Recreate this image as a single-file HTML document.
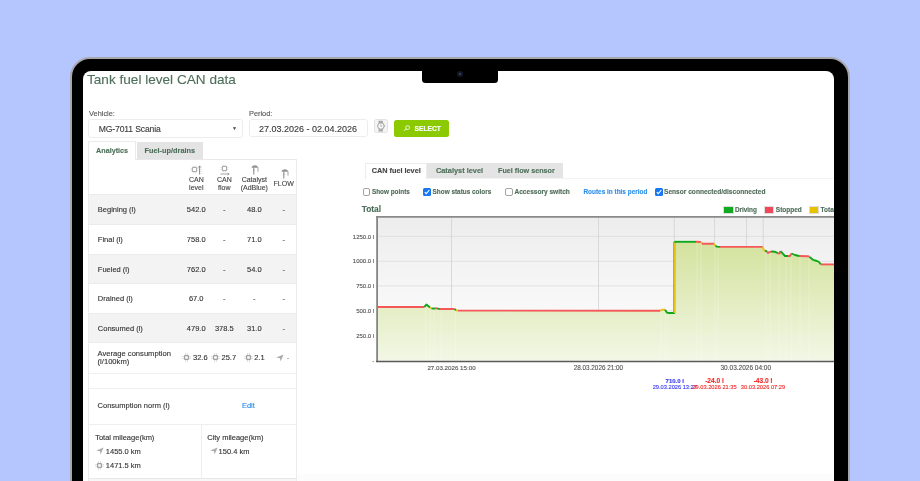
<!DOCTYPE html>
<html><head><meta charset="utf-8">
<style>
*{box-sizing:border-box;margin:0;padding:0}
html,body{width:920px;height:481px;overflow:hidden;background:#b5c5fd;font-family:"Liberation Sans",sans-serif}
.abs{position:absolute}
#frame{position:absolute;left:70px;top:57px;width:780px;height:520px;border-radius:20px;background:#000;border:2px solid #a8a8ac}
#screen{position:absolute;left:83px;top:71px;width:751px;height:420px;background:#fff;border-radius:8px 8px 0 0;overflow:hidden}
#pg{position:absolute;left:-83px;top:-71px;width:920px;height:481px;will-change:transform}
#notch{position:absolute;left:422.3px;top:70px;width:75.9px;height:13.3px;background:#000;border-radius:0 0 3.5px 3.5px}
#cam{position:absolute;left:457px;top:71px;width:6px;height:6px;border-radius:50%;background:#141820}
#cam:after{content:"";position:absolute;left:2px;top:2px;width:2px;height:2px;border-radius:50%;background:#2a4a80}
.t{position:absolute;white-space:nowrap;line-height:1;-webkit-text-stroke:0.12px currentColor}
</style></head><body>
<div id="frame"></div>
<div id="screen"><div id="pg">
<div class="t" style="left:87px;top:73px;font-size:13.6px;color:#4d6f5a;">Tank fuel level CAN data</div>
<div class="t" style="left:89px;top:110px;font-size:7.4px;color:#555;">Vehicle:</div>
<div class="abs" style="left:88.2px;top:119.2px;width:154.6px;height:18.6px;border:1px solid #ededed;border-radius:3px"></div>
<div class="t" style="left:98.8px;top:125px;font-size:8.6px;color:#3a3a3a;letter-spacing:-0.15px">MG-7011 Scania</div>
<div class="t" style="left:232px;top:126px;font-size:5px;color:#555;">&#9660;</div>
<div class="t" style="left:249px;top:110px;font-size:7.35px;color:#555;">Period:</div>
<div class="abs" style="left:248.8px;top:119.1px;width:119px;height:18.4px;border:1px solid #ededed;border-radius:3px"></div>
<div class="t" style="left:259px;top:124.6px;font-size:9px;color:#3a3a3a;">27.03.2026 - 02.04.2026</div>
<div class="abs" style="left:373.9px;top:119.3px;width:13.9px;height:14px;border:0.8px solid #e2e2e2;border-radius:2.5px;background:#f4f4f4"></div>
<svg class="abs" style="left:373.9px;top:119.3px" width="14" height="14" viewBox="0 0 14 14"><path d="M4.5 1.8h4.4v2.2h-4.4zM4.5 10.2h4.4v2.2h-4.4z" fill="#a8a8a8"/><circle cx="6.9" cy="7.05" r="3.25" fill="#f6f6f6" stroke="#9a9a9a" stroke-width="0.9"/><path d="M6.8 5.2V7.3H8.2" fill="none" stroke="#9a9a9a" stroke-width="0.6"/><path d="M10.1 6.3L11.3 7L10.1 7.7Z" fill="#9a9a9a"/></svg>
<div class="abs" style="left:394px;top:119.6px;width:55px;height:17.1px;background:#8bc900;border-radius:2.5px"></div>
<svg class="abs" style="left:402.8px;top:125.4px" width="7.5" height="6.5" viewBox="0 0 7.5 6.5"><rect x="2.8" y="0.8" width="3.6" height="3.6" rx="1.2" fill="none" stroke="#eef8dc" stroke-width="0.9"/><path d="M3.3 4L0.8 5.7" stroke="#eef8dc" stroke-width="1"/></svg>
<div class="t" style="left:414.6px;top:126.2px;font-size:6.65px;font-weight:bold;color:#fff;">SELECT</div>
<div class="abs" style="left:88px;top:158.7px;width:209px;height:330px;border:1px solid #ececec;border-top:1px solid #e8e8e8"></div>
<div class="abs" style="left:88.1px;top:141px;width:48px;height:19px;border:1px solid #ebebeb;border-bottom:none;background:#fff"></div>
<div class="t" style="left:96.1px;top:146.5px;font-size:7.2px;font-weight:bold;color:#4d6f5a;">Analytics</div>
<div class="abs" style="left:136.8px;top:142.1px;width:66.1px;height:16.5px;background:#e4e4e4"></div>
<div class="t" style="left:144.5px;top:146.5px;font-size:7.35px;font-weight:bold;color:#4d6f5a;">Fuel-up/drains</div>
<div class="abs" style="left:89px;top:194.5px;width:207.2px;height:29.9px;background:#f3f3f3"></div>
<div class="abs" style="left:89px;top:254.5px;width:207.2px;height:28.9px;background:#f3f3f3"></div>
<div class="abs" style="left:89px;top:313.5px;width:207.2px;height:29.0px;background:#f3f3f3"></div>
<div class="abs" style="left:89px;top:194.0px;width:207.2px;height:1px;background:#ebebeb"></div>
<div class="abs" style="left:89px;top:223.9px;width:207.2px;height:1px;background:#ebebeb"></div>
<div class="abs" style="left:89px;top:254.0px;width:207.2px;height:1px;background:#ebebeb"></div>
<div class="abs" style="left:89px;top:282.9px;width:207.2px;height:1px;background:#ebebeb"></div>
<div class="abs" style="left:89px;top:313.0px;width:207.2px;height:1px;background:#ebebeb"></div>
<div class="abs" style="left:89px;top:342.0px;width:207.2px;height:1px;background:#ebebeb"></div>
<div class="t" style="left:97.8px;top:206.05px;font-size:7.5px;color:#333;">Begining (l)</div>
<div class="t" style="left:146.2px;width:100px;text-align:center;top:206.05px;font-size:7.5px;color:#333;">542.0</div>
<div class="t" style="left:174.3px;width:100px;text-align:center;top:206.05px;font-size:7.5px;color:#333;">-</div>
<div class="t" style="left:204.3px;width:100px;text-align:center;top:206.05px;font-size:7.5px;color:#333;">48.0</div>
<div class="t" style="left:233.7px;width:100px;text-align:center;top:206.05px;font-size:7.5px;color:#333;">-</div>
<div class="t" style="left:97.8px;top:236.05px;font-size:7.5px;color:#333;">Final (l)</div>
<div class="t" style="left:146.2px;width:100px;text-align:center;top:236.05px;font-size:7.5px;color:#333;">758.0</div>
<div class="t" style="left:174.3px;width:100px;text-align:center;top:236.05px;font-size:7.5px;color:#333;">-</div>
<div class="t" style="left:204.3px;width:100px;text-align:center;top:236.05px;font-size:7.5px;color:#333;">71.0</div>
<div class="t" style="left:233.7px;width:100px;text-align:center;top:236.05px;font-size:7.5px;color:#333;">-</div>
<div class="t" style="left:97.8px;top:265.55px;font-size:7.5px;color:#333;">Fueled (l)</div>
<div class="t" style="left:146.2px;width:100px;text-align:center;top:265.55px;font-size:7.5px;color:#333;">762.0</div>
<div class="t" style="left:174.3px;width:100px;text-align:center;top:265.55px;font-size:7.5px;color:#333;">-</div>
<div class="t" style="left:204.3px;width:100px;text-align:center;top:265.55px;font-size:7.5px;color:#333;">54.0</div>
<div class="t" style="left:233.7px;width:100px;text-align:center;top:265.55px;font-size:7.5px;color:#333;">-</div>
<div class="t" style="left:97.8px;top:295.05px;font-size:7.5px;color:#333;">Drained (l)</div>
<div class="t" style="left:146.2px;width:100px;text-align:center;top:295.05px;font-size:7.5px;color:#333;">67.0</div>
<div class="t" style="left:174.3px;width:100px;text-align:center;top:295.05px;font-size:7.5px;color:#333;">-</div>
<div class="t" style="left:204.3px;width:100px;text-align:center;top:295.05px;font-size:7.5px;color:#333;">-</div>
<div class="t" style="left:233.7px;width:100px;text-align:center;top:295.05px;font-size:7.5px;color:#333;">-</div>
<div class="t" style="left:97.8px;top:324.6px;font-size:7.5px;color:#333;">Consumed (l)</div>
<div class="t" style="left:146.2px;width:100px;text-align:center;top:324.6px;font-size:7.5px;color:#333;">479.0</div>
<div class="t" style="left:174.3px;width:100px;text-align:center;top:324.6px;font-size:7.5px;color:#333;">378.5</div>
<div class="t" style="left:204.3px;width:100px;text-align:center;top:324.6px;font-size:7.5px;color:#333;">31.0</div>
<div class="t" style="left:233.7px;width:100px;text-align:center;top:324.6px;font-size:7.5px;color:#333;">-</div>
<div class="t" style="left:146.3px;width:100px;text-align:center;top:176.3px;font-size:7px;color:#444;">CAN</div>
<div class="t" style="left:146.3px;width:100px;text-align:center;top:184.3px;font-size:7px;color:#444;">level</div>
<div class="t" style="left:174.3px;width:100px;text-align:center;top:176.3px;font-size:7px;color:#444;">CAN</div>
<div class="t" style="left:174.3px;width:100px;text-align:center;top:184.3px;font-size:7px;color:#444;">flow</div>
<div class="t" style="left:204.3px;width:100px;text-align:center;top:176.3px;font-size:7px;color:#444;">Catalyst</div>
<div class="t" style="left:204.3px;width:100px;text-align:center;top:184.3px;font-size:7px;color:#444;">(AdBlue)</div>
<div class="t" style="left:233.7px;width:100px;text-align:center;top:180.2px;font-size:7px;color:#444;">FLOW</div>
<svg class="abs" style="left:190.2px;top:164.9px" width="9" height="9" viewBox="0 0 9 9"><rect x="2.3" y="2.3" width="4.4" height="4.4" rx="0.6" fill="none" stroke="#999" stroke-width="1"/><path d="M3.4 0.5v1.3M5.6 0.5v1.3M3.4 7.2v1.3M5.6 7.2v1.3M0.5 3.4h1.3M0.5 5.6h1.3M7.2 3.4h1.3M7.2 5.6h1.3" stroke="#d0d0d0" stroke-width="0.6"/></svg>
<svg class="abs" style="left:197px;top:164.5px" width="5" height="10" viewBox="0 0 5 10"><path d="M2.6 1v8.5" stroke="#8a8a8a" stroke-width="1"/><path d="M1.2 2.6L2.6 0.8L4 2.6" fill="none" stroke="#8a8a8a" stroke-width="0.8"/><path d="M3.6 4.5h1M3.6 6.5h1M3.6 8.5h1" stroke="#bbb" stroke-width="0.6"/></svg>
<svg class="abs" style="left:220.1px;top:164.1px" width="9" height="9" viewBox="0 0 9 9"><rect x="2.3" y="2.3" width="4.4" height="4.4" rx="0.6" fill="none" stroke="#999" stroke-width="1"/><path d="M3.4 0.5v1.3M5.6 0.5v1.3M3.4 7.2v1.3M5.6 7.2v1.3M0.5 3.4h1.3M0.5 5.6h1.3M7.2 3.4h1.3M7.2 5.6h1.3" stroke="#d0d0d0" stroke-width="0.6"/></svg>
<svg class="abs" style="left:219.5px;top:171.5px" width="10" height="4" viewBox="0 0 10 4"><path d="M0.5 2h8.6" stroke="#8a8a8a" stroke-width="0.8"/><path d="M7.6 0.9L9.1 2L7.6 3.1" fill="none" stroke="#8a8a8a" stroke-width="0.7"/></svg>
<svg class="abs" style="left:251.4px;top:164.5px" width="8" height="10" viewBox="0 0 8 10"><path d="M0.4 2.8Q0.8 0.3 3.6 0.3Q6.4 0.3 7.2 2.2L7.2 2.8Z" fill="#929292"/><path d="M2.8 2.4v7.2" stroke="#8f8f8f" stroke-width="1.1"/><path d="M2.1 5.2h1.4" stroke="#9a9a9a" stroke-width="0.9"/><path d="M7 2.5v4.2" stroke="#9c9c9c" stroke-width="0.9"/></svg>
<svg class="abs" style="left:280.8px;top:169.2px" width="8" height="10" viewBox="0 0 8 10"><path d="M0.4 2.8Q0.8 0.3 3.6 0.3Q6.4 0.3 7.2 2.2L7.2 2.8Z" fill="#929292"/><path d="M2.8 2.4v7.2" stroke="#8f8f8f" stroke-width="1.1"/><path d="M2.1 5.2h1.4" stroke="#9a9a9a" stroke-width="0.9"/><path d="M7 2.5v4.2" stroke="#9c9c9c" stroke-width="0.9"/></svg>
<div class="t" style="left:97.6px;top:350.1px;font-size:7.6px;color:#333;line-height:8.2px">Average consumption<br>(l/100km)</div>
<svg class="abs" style="left:181.9px;top:352.7px" width="9" height="9" viewBox="0 0 9 9"><rect x="2.6" y="2.6" width="3.8" height="3.8" rx="0.4" fill="none" stroke="#a2a2a2" stroke-width="1.25"/><path d="M3.6 0.2v1.8M5.4 0.2v1.8M3.6 7v1.8M5.4 7v1.8M0.2 3.6h1.8M0.2 5.4h1.8M7 3.6h1.8M7 5.4h1.8" stroke="#c8c8c8" stroke-width="0.7"/></svg>
<div class="t" style="left:193px;top:354.3px;font-size:7.5px;color:#333;">32.6</div>
<svg class="abs" style="left:210.5px;top:352.7px" width="9" height="9" viewBox="0 0 9 9"><rect x="2.6" y="2.6" width="3.8" height="3.8" rx="0.4" fill="none" stroke="#a2a2a2" stroke-width="1.25"/><path d="M3.6 0.2v1.8M5.4 0.2v1.8M3.6 7v1.8M5.4 7v1.8M0.2 3.6h1.8M0.2 5.4h1.8M7 3.6h1.8M7 5.4h1.8" stroke="#c8c8c8" stroke-width="0.7"/></svg>
<div class="t" style="left:221.5px;top:354.3px;font-size:7.5px;color:#333;">25.7</div>
<svg class="abs" style="left:243.8px;top:352.7px" width="9" height="9" viewBox="0 0 9 9"><rect x="2.6" y="2.6" width="3.8" height="3.8" rx="0.4" fill="none" stroke="#a2a2a2" stroke-width="1.25"/><path d="M3.6 0.2v1.8M5.4 0.2v1.8M3.6 7v1.8M5.4 7v1.8M0.2 3.6h1.8M0.2 5.4h1.8M7 3.6h1.8M7 5.4h1.8" stroke="#c8c8c8" stroke-width="0.7"/></svg>
<div class="t" style="left:254.3px;top:354.3px;font-size:7.5px;color:#333;">2.1</div>
<svg class="abs" style="left:276.3px;top:353.6px" width="8" height="8" viewBox="0 0 8 8"><path d="M0.3 3.6L7.6 0.4L4.6 7.6L4 4.2Z" fill="#aaa"/></svg>
<div class="t" style="left:286.8px;top:354.3px;font-size:7.5px;color:#777;">-</div>
<div class="abs" style="left:89px;top:372.5px;width:207.2px;height:1px;background:#efefef"></div>
<div class="abs" style="left:89px;top:387.7px;width:207.2px;height:1px;background:#efefef"></div>
<div class="t" style="left:97.6px;top:402px;font-size:7.5px;color:#333;">Consumption norm (l)</div>
<div class="t" style="left:241.9px;top:402px;font-size:7.5px;color:#2d8fe6;">Edit</div>
<div class="abs" style="left:89px;top:423.5px;width:207.2px;height:1px;background:#eeeeee"></div>
<div class="abs" style="left:200.8px;top:424px;width:1px;height:54.5px;background:#eeeeee"></div>
<div class="abs" style="left:89px;top:478.2px;width:207px;height:1px;background:#e8e8e8"></div>
<div class="abs" style="left:89px;top:479.2px;width:207px;height:3px;background:#f7f7f7"></div>
<div class="t" style="left:95.2px;top:433.7px;font-size:7.5px;color:#333;">Total mileage(km)</div>
<svg class="abs" style="left:96.1px;top:447.3px" width="8" height="8" viewBox="0 0 8 8"><path d="M0.3 3.6L7.6 0.4L4.6 7.6L4 4.2Z" fill="#adadad"/></svg>
<div class="t" style="left:105.8px;top:447.8px;font-size:7.5px;color:#333;">1455.0 km</div>
<svg class="abs" style="left:95.1px;top:460.6px" width="9" height="9" viewBox="0 0 9 9"><rect x="2.6" y="2.6" width="3.8" height="3.8" rx="0.4" fill="none" stroke="#a2a2a2" stroke-width="1.25"/><path d="M3.6 0.2v1.8M5.4 0.2v1.8M3.6 7v1.8M5.4 7v1.8M0.2 3.6h1.8M0.2 5.4h1.8M7 3.6h1.8M7 5.4h1.8" stroke="#c8c8c8" stroke-width="0.7"/></svg>
<div class="t" style="left:105.8px;top:461.8px;font-size:7.5px;color:#333;">1471.5 km</div>
<div class="t" style="left:207.2px;top:433.7px;font-size:7.5px;color:#333;">City mileage(km)</div>
<svg class="abs" style="left:209.5px;top:447.3px" width="8" height="8" viewBox="0 0 8 8"><path d="M0.3 3.6L7.6 0.4L4.6 7.6L4 4.2Z" fill="#adadad"/></svg>
<div class="t" style="left:218.6px;top:447.8px;font-size:7.5px;color:#333;">150.4 km</div>
<div class="abs" style="left:297px;top:474px;width:540px;height:10px;background:#fcfcfc"></div>
<div class="abs" style="left:365.5px;top:177.9px;width:470px;height:1px;background:#f3f3f3"></div>
<div class="abs" style="left:365px;top:163.3px;width:62px;height:15.6px;border:1px solid #ececec;border-bottom:none;background:#fff"></div>
<div class="abs" style="left:427px;top:163.1px;width:135.8px;height:14.8px;background:#e4e4e4"></div>
<div class="t" style="left:371.7px;top:167px;font-size:7.3px;font-weight:bold;color:#444;">CAN fuel level</div>
<div class="t" style="left:435.9px;top:167px;font-size:7.4px;font-weight:bold;color:#4d6f5a;">Catalyst level</div>
<div class="t" style="left:498px;top:167px;font-size:7.2px;font-weight:bold;color:#4d6f5a;">Fuel flow sensor</div>
<div class="abs" style="left:362.7px;top:188.3px;width:7.5px;height:7.5px;border:0.9px solid #a2a2a2;border-radius:2px;background:#fff"></div>
<div class="t" style="left:371.9px;top:188.8px;font-size:6.4px;font-weight:bold;color:#4f6b58;">Show points</div>
<svg class="abs" style="left:423.2px;top:188.3px" width="8" height="8" viewBox="0 0 8 8"><rect x="0" y="0" width="8" height="8" rx="1.5" fill="#1877f2"/><path d="M1.8 4.1L3.3 5.7L6.3 2" fill="none" stroke="#fff" stroke-width="1.1"/></svg>
<div class="t" style="left:432.6px;top:188.8px;font-size:6.4px;font-weight:bold;color:#4f6b58;">Show status colors</div>
<div class="abs" style="left:505.4px;top:188.3px;width:7.5px;height:7.5px;border:0.9px solid #a2a2a2;border-radius:2px;background:#fff"></div>
<div class="t" style="left:514.5px;top:188.8px;font-size:6.55px;font-weight:bold;color:#4f6b58;">Accessory switch</div>
<div class="t" style="left:583.4px;top:188.8px;font-size:6.45px;font-weight:bold;color:#2d8fe6;">Routes in this period</div>
<svg class="abs" style="left:655.4px;top:188.3px" width="8" height="8" viewBox="0 0 8 8"><rect x="0" y="0" width="8" height="8" rx="1.5" fill="#1877f2"/><path d="M1.8 4.1L3.3 5.7L6.3 2" fill="none" stroke="#fff" stroke-width="1.1"/></svg>
<div class="t" style="left:664px;top:188.8px;font-size:6.6px;font-weight:bold;color:#4f6b58;">Sensor connected/disconnected</div>
<div class="t" style="left:361.7px;top:204.5px;font-size:8.4px;font-weight:bold;color:#4d6f5a;">Total</div>
<div class="abs" style="left:724.3px;top:207.1px;width:8.3px;height:5.6px;background:#10aa20;outline:0.5px solid #ddd"></div>
<div class="t" style="left:734.9px;top:206.6px;font-size:6.4px;font-weight:bold;color:#4d6a58;">Driving</div>
<div class="abs" style="left:765.2px;top:207.1px;width:8.1px;height:5.6px;background:#f04858;outline:0.5px solid #ddd"></div>
<div class="t" style="left:775.8px;top:206.6px;font-size:6.5px;font-weight:bold;color:#4d6a58;">Stopped</div>
<div class="abs" style="left:809.8px;top:207.1px;width:8.1px;height:5.6px;background:#e6c200;outline:0.5px solid #ddd"></div>
<div class="t" style="left:820.6px;top:206.6px;font-size:6.5px;font-weight:bold;color:#4d6a58;">Total</div>
<svg class="abs" style="left:0;top:0" width="920" height="481" viewBox="0 0 920 481"><defs><linearGradient id="bg" gradientUnits="userSpaceOnUse" x1="0" y1="217" x2="0" y2="361"><stop offset="0" stop-color="#ededed"/><stop offset="1" stop-color="#ffffff"/></linearGradient><linearGradient id="ar" gradientUnits="userSpaceOnUse" x1="0" y1="240" x2="0" y2="361"><stop offset="0" stop-color="#d2e29c"/><stop offset="1" stop-color="#f3f7e6"/></linearGradient><clipPath id="ac"><path d="M377,307 L424.3,307 L426.4,304.6 L430,307.5 L431.5,308.5 L435,308.5 L437,308.3 L440,309.2 L441,309 L454.6,309 L456,310.2 L458,310.6 L660.3,310.8 L662,309.6 L665,309.8 L667,312.6 L668.5,313 L674.3,313 L674.3,241.8 L696,241.8 L701,242 L702,243.7 L714,243.8 L715.5,246 L717,246.6 L720,246.9 L762.8,246.9 L763.5,249.5 L765,250.7 L767,251.5 L768,253 L769.5,252.2 L771,251.5 L775,251.8 L778,253.2 L779.5,253.5 L780.5,251.2 L785,256 L788,256 L790,256 L791.5,253.5 L795,255 L799,256 L808,256.2 L809.5,257 L813,259.8 L817,261 L819,262 L820.8,264.4 L840,264.4 L840,361 L377,361 Z"/></clipPath></defs><rect x="377" y="217" width="460" height="144" fill="url(#bg)"/><line x1="377" y1="236.4" x2="840" y2="236.4" stroke="#dcdcdc" stroke-width="0.8"/><line x1="377" y1="261.3" x2="840" y2="261.3" stroke="#dcdcdc" stroke-width="0.8"/><line x1="377" y1="285.9" x2="840" y2="285.9" stroke="#dcdcdc" stroke-width="0.8"/><line x1="377" y1="310.8" x2="840" y2="310.8" stroke="#dcdcdc" stroke-width="0.8"/><line x1="377" y1="336" x2="840" y2="336" stroke="#dcdcdc" stroke-width="0.8"/><line x1="451.5" y1="217" x2="451.5" y2="361" stroke="#d2d2d2" stroke-width="0.8"/><line x1="598.5" y1="217" x2="598.5" y2="361" stroke="#d2d2d2" stroke-width="0.8"/><line x1="746.5" y1="217" x2="746.5" y2="361" stroke="#d2d2d2" stroke-width="0.8"/><line x1="674.3" y1="217" x2="674.3" y2="361" stroke="#d2d2d2" stroke-width="0.8"/><line x1="714.6" y1="217" x2="714.6" y2="361" stroke="#d2d2d2" stroke-width="0.8"/><line x1="763.2" y1="217" x2="763.2" y2="361" stroke="#d2d2d2" stroke-width="0.8"/><path d="M377,307 L424.3,307 L426.4,304.6 L430,307.5 L431.5,308.5 L435,308.5 L437,308.3 L440,309.2 L441,309 L454.6,309 L456,310.2 L458,310.6 L660.3,310.8 L662,309.6 L665,309.8 L667,312.6 L668.5,313 L674.3,313 L674.3,241.8 L696,241.8 L701,242 L702,243.7 L714,243.8 L715.5,246 L717,246.6 L720,246.9 L762.8,246.9 L763.5,249.5 L765,250.7 L767,251.5 L768,253 L769.5,252.2 L771,251.5 L775,251.8 L778,253.2 L779.5,253.5 L780.5,251.2 L785,256 L788,256 L790,256 L791.5,253.5 L795,255 L799,256 L808,256.2 L809.5,257 L813,259.8 L817,261 L819,262 L820.8,264.4 L840,264.4 L840,361 L377,361 Z" fill="url(#ar)"/><g clip-path="url(#ac)"><line x1="425.5" y1="217" x2="425.5" y2="361" stroke="#ffffff" stroke-opacity="0.35" stroke-width="0.7"/><line x1="430" y1="217" x2="430" y2="361" stroke="#ffffff" stroke-opacity="0.35" stroke-width="0.7"/><line x1="434" y1="217" x2="434" y2="361" stroke="#ffffff" stroke-opacity="0.35" stroke-width="0.7"/><line x1="441" y1="217" x2="441" y2="361" stroke="#ffffff" stroke-opacity="0.35" stroke-width="0.7"/><line x1="455.5" y1="217" x2="455.5" y2="361" stroke="#ffffff" stroke-opacity="0.35" stroke-width="0.7"/><line x1="661" y1="217" x2="661" y2="361" stroke="#ffffff" stroke-opacity="0.35" stroke-width="0.7"/><line x1="665" y1="217" x2="665" y2="361" stroke="#ffffff" stroke-opacity="0.35" stroke-width="0.7"/><line x1="668" y1="217" x2="668" y2="361" stroke="#ffffff" stroke-opacity="0.35" stroke-width="0.7"/><line x1="697" y1="217" x2="697" y2="361" stroke="#ffffff" stroke-opacity="0.35" stroke-width="0.7"/><line x1="701" y1="217" x2="701" y2="361" stroke="#ffffff" stroke-opacity="0.35" stroke-width="0.7"/><line x1="715" y1="217" x2="715" y2="361" stroke="#ffffff" stroke-opacity="0.35" stroke-width="0.7"/><line x1="718" y1="217" x2="718" y2="361" stroke="#ffffff" stroke-opacity="0.35" stroke-width="0.7"/><line x1="766" y1="217" x2="766" y2="361" stroke="#ffffff" stroke-opacity="0.35" stroke-width="0.7"/><line x1="770" y1="217" x2="770" y2="361" stroke="#ffffff" stroke-opacity="0.35" stroke-width="0.7"/><line x1="779" y1="217" x2="779" y2="361" stroke="#ffffff" stroke-opacity="0.35" stroke-width="0.7"/><line x1="786" y1="217" x2="786" y2="361" stroke="#ffffff" stroke-opacity="0.35" stroke-width="0.7"/><line x1="791" y1="217" x2="791" y2="361" stroke="#ffffff" stroke-opacity="0.35" stroke-width="0.7"/><line x1="800" y1="217" x2="800" y2="361" stroke="#ffffff" stroke-opacity="0.35" stroke-width="0.7"/><line x1="809" y1="217" x2="809" y2="361" stroke="#ffffff" stroke-opacity="0.35" stroke-width="0.7"/></g><polyline points="377,307 424.3,307" fill="none" stroke="#f45858" stroke-width="1.9" stroke-linejoin="round"/><polyline points="424.3,307 426.4,304.6 430,307.5" fill="none" stroke="#0ea81a" stroke-width="1.9" stroke-linejoin="round"/><polyline points="430,307.5 431.5,308.5" fill="none" stroke="#e8c21a" stroke-width="1.9" stroke-linejoin="round"/><polyline points="431.5,308.5 435,308.5" fill="none" stroke="#0ea81a" stroke-width="1.9" stroke-linejoin="round"/><polyline points="435,308.5 437,308.3" fill="none" stroke="#f45858" stroke-width="1.9" stroke-linejoin="round"/><polyline points="437,308.3 440,309.2" fill="none" stroke="#0ea81a" stroke-width="1.9" stroke-linejoin="round"/><polyline points="440,309.2 441,309 454.6,309" fill="none" stroke="#f45858" stroke-width="1.9" stroke-linejoin="round"/><polyline points="454.6,309 456,310.2" fill="none" stroke="#0ea81a" stroke-width="1.9" stroke-linejoin="round"/><polyline points="456,310.2 458,310.6" fill="none" stroke="#e8c21a" stroke-width="1.9" stroke-linejoin="round"/><polyline points="458,310.6 660.3,310.8" fill="none" stroke="#f45858" stroke-width="1.9" stroke-linejoin="round"/><polyline points="660.3,310.8 662,309.6 665,309.8" fill="none" stroke="#e8c21a" stroke-width="1.9" stroke-linejoin="round"/><polyline points="665,309.8 667,312.6 668.5,313 674.3,313 674.3,241.8" fill="none" stroke="#0ea81a" stroke-width="1.9" stroke-linejoin="round"/><polyline points="696,241.8 701,242" fill="none" stroke="#f45858" stroke-width="1.9" stroke-linejoin="round"/><polyline points="701,242 702,243.7" fill="none" stroke="#e8c21a" stroke-width="1.9" stroke-linejoin="round"/><polyline points="702,243.7 714,243.8" fill="none" stroke="#f45858" stroke-width="1.9" stroke-linejoin="round"/><polyline points="714,243.8 715.5,246" fill="none" stroke="#e8c21a" stroke-width="1.9" stroke-linejoin="round"/><polyline points="715.5,246 717,246.6 720,246.9" fill="none" stroke="#0ea81a" stroke-width="1.9" stroke-linejoin="round"/><polyline points="720,246.9 762.8,246.9" fill="none" stroke="#f45858" stroke-width="1.9" stroke-linejoin="round"/><polyline points="762.8,246.9 763.5,249.5 765,250.7" fill="none" stroke="#e8c21a" stroke-width="1.9" stroke-linejoin="round"/><polyline points="765,250.7 767,251.5" fill="none" stroke="#0ea81a" stroke-width="1.9" stroke-linejoin="round"/><polyline points="767,251.5 768,253 769.5,252.2 771,251.5" fill="none" stroke="#f45858" stroke-width="1.9" stroke-linejoin="round"/><polyline points="771,251.5 775,251.8 778,253.2" fill="none" stroke="#0ea81a" stroke-width="1.9" stroke-linejoin="round"/><polyline points="778,253.2 779.5,253.5 780.5,251.2" fill="none" stroke="#f45858" stroke-width="1.9" stroke-linejoin="round"/><polyline points="780.5,251.2 785,256 788,256" fill="none" stroke="#0ea81a" stroke-width="1.9" stroke-linejoin="round"/><polyline points="788,256 790,256 791.5,253.5" fill="none" stroke="#f45858" stroke-width="1.9" stroke-linejoin="round"/><polyline points="791.5,253.5 795,255 799,256" fill="none" stroke="#0ea81a" stroke-width="1.9" stroke-linejoin="round"/><polyline points="799,256 808,256.2 809.5,257" fill="none" stroke="#f45858" stroke-width="1.9" stroke-linejoin="round"/><polyline points="809.5,257 813,259.8 817,261 819,262 820.8,264.4" fill="none" stroke="#0ea81a" stroke-width="1.9" stroke-linejoin="round"/><polyline points="820.8,264.4 840,264.4" fill="none" stroke="#f45858" stroke-width="1.9" stroke-linejoin="round"/><polyline points="674.3,313 674.3,241.8" fill="none" stroke="#e8c21a" stroke-width="1.4"/><polyline points="674.3,241.8 696,241.8" fill="none" stroke="#0ea81a" stroke-width="1.9"/><line x1="377.1" y1="216" x2="377.1" y2="362" stroke="#858585" stroke-width="1.8"/><line x1="376" y1="216.9" x2="840" y2="216.9" stroke="#8a8a8a" stroke-width="1.8"/><line x1="376" y1="361.4" x2="840" y2="361.4" stroke="#5a5a5a" stroke-width="1.5"/></svg>
<div class="t" style="right:545.8px;top:233.50px;font-size:6px;color:#555;text-align:right">1250.0 l</div>
<div class="t" style="right:545.8px;top:258.40px;font-size:6px;color:#555;text-align:right">1000.0 l</div>
<div class="t" style="right:545.8px;top:283.00px;font-size:6px;color:#555;text-align:right">750.0 l</div>
<div class="t" style="right:545.8px;top:307.90px;font-size:6px;color:#555;text-align:right">500.0 l</div>
<div class="t" style="right:545.8px;top:333.10px;font-size:6px;color:#555;text-align:right">250.0 l</div>
<div class="t" style="right:545.8px;top:358.10px;font-size:6px;color:#555;text-align:right">-</div>
<div class="t" style="left:401.5px;width:100px;text-align:center;top:365px;font-size:6.2px;color:#555;">27.03.2026 15:00</div>
<div class="t" style="left:548.4px;width:100px;text-align:center;top:365px;font-size:6.35px;color:#555;">28.03.2026 21:00</div>
<div class="t" style="left:695.8px;width:100px;text-align:center;top:365px;font-size:6.5px;color:#555;">30.03.2026 04:00</div>
<div class="t" style="left:624.8px;width:100px;text-align:center;top:377.6px;font-size:6px;font-weight:bold;color:#3535f5;">710.0 l</div>
<div class="t" style="left:624.8px;width:100px;text-align:center;top:384.8px;font-size:5.7px;color:#3535f5;">29.03.2026 13:27</div>
<div class="t" style="left:664.5px;width:100px;text-align:center;top:377.6px;font-size:6.6px;font-weight:bold;color:#f52a2a;">-24.0 l</div>
<div class="t" style="left:664.5px;width:100px;text-align:center;top:384.8px;font-size:5.7px;color:#f52a2a;">29.03.2026 21:35</div>
<div class="t" style="left:713px;width:100px;text-align:center;top:377.6px;font-size:6.6px;font-weight:bold;color:#f52a2a;">-43.0 l</div>
<div class="t" style="left:713px;width:100px;text-align:center;top:384.8px;font-size:5.7px;color:#f52a2a;">30.03.2026 07:29</div>
</div></div>
<div id="notch"></div>
<div id="cam"></div>
</body></html>
